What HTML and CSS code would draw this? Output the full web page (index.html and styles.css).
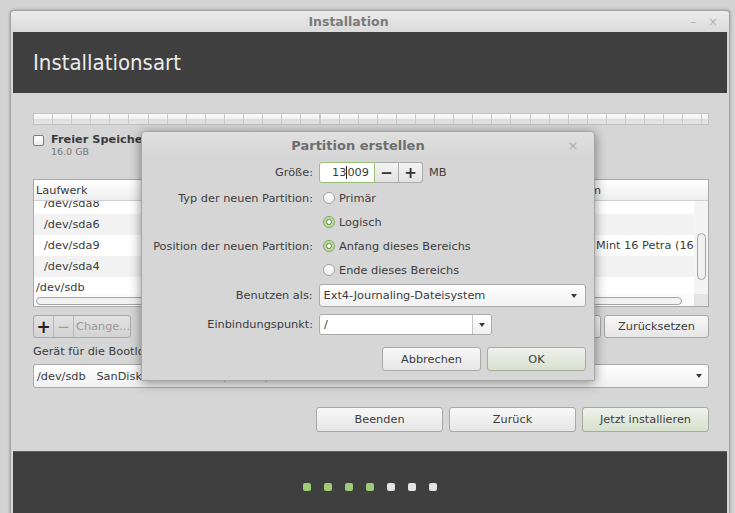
FILE: index.html
```html
<!DOCTYPE html>
<html lang="de">
<head>
<meta charset="utf-8">
<title>Installation</title>
<link rel="stylesheet" href="styles.css">
</head>
<body>
<div class="window">
  <div class="titlebar">
    <span class="win-title">Installation</span>
    <span class="wm-buttons"><span class="wm-min">–</span><span class="wm-close">×</span></span>
  </div>
  <div class="frame">
    <div class="header"><h1>Installationsart</h1></div>
    <div class="content">
      <div class="partbar"></div>
      <div class="legend">
        <span class="checkbox"></span>
        <div>
          <div class="legend-name">Freier Speicherplatz</div>
          <div class="legend-size">16.0 GB</div>
        </div>
      </div>

      <div class="table">
        <div class="thead"><span class="col-dev">Laufwerk</span><span class="col-sys">System</span></div>
        <div class="rows">
          <div class="rows-inner">
            <div class="row"><span class="col-dev sub">/dev/sda8</span><span class="col-sys"></span></div>
            <div class="row"><span class="col-dev sub">/dev/sda6</span><span class="col-sys"></span></div>
            <div class="row"><span class="col-dev sub">/dev/sda9</span><span class="col-sys">Linux Mint 16 Petra (16.04)</span></div>
            <div class="row"><span class="col-dev sub">/dev/sda4</span><span class="col-sys"></span></div>
            <div class="row"><span class="col-dev">/dev/sdb</span><span class="col-sys"></span></div>
          </div>
        </div>
        <div class="vscroll"><span class="vthumb"></span></div>
        <div class="hscroll"><span class="hthumb"></span></div>
        <div class="corner"></div>
      </div>

      <div class="tools">
        <div class="btn-group">
          <span class="tb tb-add">+</span>
          <span class="tb tb-del">−</span>
          <span class="tb tb-change">Change...</span>
        </div>
        <div class="tools-right">
          <span class="btn">Neue Partitionstabelle …</span>
          <span class="btn btn-revert">Zurücksetzen</span>
        </div>
      </div>

      <div class="boot-label">Gerät für die Bootloader-Installation:</div>
      <div class="combo boot-combo">
        <span class="combo-text">/dev/sdb &nbsp; SanDisk Cruzer Blade (8.0 GB)</span>
        <span class="arrow"></span>
      </div>

      <div class="actions">
        <span class="btn btn-wide">Beenden</span>
        <span class="btn btn-wide">Zurück</span>
        <span class="btn btn-wide btn-suggested">Jetzt installieren</span>
      </div>
    </div>
    <div class="footer">
      <span class="dot done"></span>
      <span class="dot done"></span>
      <span class="dot done"></span>
      <span class="dot done"></span>
      <span class="dot"></span>
      <span class="dot"></span>
      <span class="dot"></span>
    </div>
  </div>
</div>

<div class="dialog">
  <div class="dlg-titlebar">
    <span class="dlg-title">Partition erstellen</span>
    <span class="dlg-close">×</span>
  </div>
  <div class="dlg-body">
    <div class="field f-size">
      <span class="lbl">Größe:</span>
      <div class="spin">
        <span class="spin-entry">13<span class="caret"></span>009</span>
        <span class="spin-btn">−</span>
        <span class="spin-btn">+</span>
      </div>
      <span class="unit">MB</span>
    </div>
    <div class="field f-radio f-first">
      <span class="lbl">Typ der neuen Partition:</span>
      <span class="radio"></span><span class="radio-text">Primär</span>
    </div>
    <div class="field f-radio">
      <span class="lbl"></span>
      <span class="radio checked"></span><span class="radio-text">Logisch</span>
    </div>
    <div class="field f-radio">
      <span class="lbl">Position der neuen Partition:</span>
      <span class="radio checked"></span><span class="radio-text">Anfang dieses Bereichs</span>
    </div>
    <div class="field f-radio">
      <span class="lbl"></span>
      <span class="radio"></span><span class="radio-text">Ende dieses Bereichs</span>
    </div>
    <div class="field f-use">
      <span class="lbl">Benutzen als:</span>
      <div class="combo use-combo">
        <span class="combo-text">Ext4-Journaling-Dateisystem</span>
        <span class="arrow"></span>
      </div>
    </div>
    <div class="field f-mount">
      <span class="lbl">Einbindungspunkt:</span>
      <div class="entry-combo">
        <span class="entry-part">/</span>
        <span class="entry-btn"><span class="arrow"></span></span>
      </div>
    </div>
    <div class="dlg-actions">
      <span class="btn dlg-btn">Abbrechen</span>
      <span class="btn dlg-btn btn-suggested">OK</span>
    </div>
  </div>
</div>
</body>
</html>
```
FILE: styles.css
```css
* { box-sizing: border-box; }

html, body { margin: 0; }

body {
  width: 735px;
  height: 513px;
  overflow: hidden;
  position: relative;
  background: #d3d3d3;
  font-family: "DejaVu Sans", sans-serif;
  font-size: 11.3px;
  color: #3c3c3c;
}

/* main installer window */
.window {
  margin: 10px 0 0 10px;
  width: 720px;
  height: 520px;
  background: #d6d6d6;
  border: 1px solid #a4a4a4;
  border-bottom: none;
  border-radius: 4px 4px 0 0;
  box-shadow: 0 0 3px rgba(0, 0, 0, 0.35);
}

.titlebar {
  height: 21px;
  display: flex;
  align-items: center;
  background: linear-gradient(#ececec, #dadada);
  border-radius: 4px 4px 0 0;
}

.win-title {
  flex: 1;
  text-align: center;
  padding-left: 16px;
  font-weight: bold;
  font-size: 12.5px;
  color: #7a7a7a;
}

.wm-buttons {
  display: flex;
  gap: 12px;
  padding: 0 11px 0 20px;
  color: #b4b4b4;
  font-size: 12px;
}

.frame { padding: 0 2px; }

.header {
  height: 61px;
  background: #3f3f3f;
  padding-left: 20px;
  display: flex;
  align-items: center;
}

.header h1 {
  margin: 0;
  font-family: "DejaVu Sans Condensed", "DejaVu Sans", sans-serif;
  font-stretch: condensed;
  font-weight: normal;
  font-size: 22px;
  color: #ebebeb;
}

.content {
  height: 358px;
  padding: 20px 18px 0 20px;
}

/* partition overview bar */
.partbar {
  height: 12px;
  border: 1px solid #c2c2c2;
  background:
    repeating-linear-gradient(90deg, transparent 0 18px, #cbcbcb 18px 19.1px),
    linear-gradient(#fbfbfb, #f1f1f1 50%, #dedede 55%, #e6e6e6);
}

.legend {
  margin-top: 8px;
  display: flex;
  gap: 7px;
}

.checkbox {
  width: 11px;
  height: 11px;
  margin-top: 2px;
  border: 1px solid #7c7c7c;
  border-radius: 2px;
  background: linear-gradient(#ffffff, #ececec);
}

.legend-name {
  font-weight: bold;
  line-height: 13px;
  white-space: nowrap;
}

.legend-size {
  font-size: 9.5px;
  line-height: 12px;
  color: #767676;
}

/* partition table */
.table {
  margin-top: 21px;
  height: 128px;
  border: 1px solid #a9a9a9;
  background: #fff;
  display: grid;
  grid-template-columns: 1fr 14px;
  grid-template-rows: 21px 93px 1fr;
}

.thead {
  grid-column: 1 / 3;
  display: grid;
  grid-template-columns: 525px 1fr;
  align-items: center;
  background: linear-gradient(#ffffff, #eeeeee);
  border-bottom: 1px solid #d0d0d0;
  white-space: nowrap;
  overflow: hidden;
}

.thead .col-dev { padding-left: 2px; }

.rows {
  overflow: hidden;
}

.rows-inner { margin-top: -8px; }

.row {
  height: 21px;
  line-height: 21px;
  display: grid;
  grid-template-columns: 528px 1fr;
  white-space: nowrap;
  overflow: hidden;
}

.row:nth-child(even) { background: #f2f2f2; }

.row .col-dev { padding-left: 2px; }
.row .col-dev.sub { padding-left: 10px; }

.row span { overflow: hidden; }

.vscroll {
  position: relative;
  background: #f4f4f4;
}

.vthumb {
  position: absolute;
  left: 3px;
  top: 32px;
  width: 9px;
  height: 47px;
  border: 1px solid #a3a3a3;
  border-radius: 5px;
  background: #f0f0f0;
}

.hscroll {
  position: relative;
  background: #fbfbfb;
}

.hthumb {
  position: absolute;
  left: 2px;
  top: 3px;
  width: 646px;
  height: 8px;
  border: 1px solid #a6a6a6;
  border-radius: 4px;
  background: #f2f2f2;
}

.corner { background: #e4e4e4; }

/* buttons under the table */
.tools {
  margin-top: 8px;
  height: 23px;
  display: flex;
  justify-content: space-between;
}

.btn-group {
  display: flex;
  border: 1px solid #a9a9a9;
  border-radius: 3px;
  background: linear-gradient(#e2e2e2, #d3d3d3);
}

.tb {
  display: flex;
  align-items: center;
  justify-content: center;
}

.tb + .tb { border-left: 1px solid #b9b9b9; }

.tb-add { width: 19px; font-size: 17px; font-weight: bold; color: #222; }
.tb-del { width: 20px; font-size: 15px; color: #9b9b9b; }
.tb-change { width: 57px; color: #9a9a9a; padding-left: 2px; justify-content: flex-start; }

.tools-right {
  display: flex;
  gap: 3px;
}

.btn {
  display: flex;
  align-items: center;
  justify-content: center;
  padding: 0 10px;
  border: 1px solid #a8a8a8;
  border-radius: 3px;
  background: linear-gradient(#f8f8f8, #e6e6e6);
  color: #3c3c3c;
  white-space: nowrap;
}

.btn-revert { width: 105px; }

.btn-suggested {
  background: linear-gradient(#eff1ec, #d7e1cd);
  border-color: #a4ab9d;
}

.boot-label {
  margin-top: 7px;
  line-height: 14px;
}

.combo {
  display: flex;
  align-items: center;
  justify-content: space-between;
  border: 1px solid #aaaaaa;
  border-radius: 3px;
  background: linear-gradient(#ffffff, #f1f1f1);
}

.boot-combo {
  margin-top: 5px;
  height: 24px;
  padding: 0 6px 0 3px;
}

.arrow {
  width: 0;
  height: 0;
  border-left: 3.5px solid transparent;
  border-right: 3.5px solid transparent;
  border-top: 4px solid #3a3a3a;
}

.actions {
  margin-top: 19px;
  height: 25px;
  display: flex;
  justify-content: flex-end;
  gap: 6px;
}

.btn-wide { width: 127px; }

/* progress footer */
.footer {
  height: 70px;
  background: #3f3f3f;
  border-top: 1px solid #5c5c5c;
  display: flex;
  justify-content: center;
  gap: 13px;
  padding-top: 31px;
}

.dot {
  width: 8px;
  height: 8px;
  border-radius: 2px;
  background: #e4e4e4;
}

.dot.done { background: #9fca76; }

/* modal dialog */
.dialog {
  position: absolute;
  left: 141px;
  top: 131px;
  width: 454px;
  height: 250px;
  background: #d6d6d6;
  border: 1px solid #a7a7a7;
  border-radius: 4px 4px 0 0;
  box-shadow: 0 2px 12px rgba(0, 0, 0, 0.45);
}

.dlg-titlebar {
  height: 26px;
  display: flex;
  align-items: center;
  background: linear-gradient(#e0e0e0, #d6d6d6);
  border-radius: 4px 4px 0 0;
}

.dlg-title {
  flex: 1;
  text-align: center;
  padding-left: 14px;
  font-weight: bold;
  font-size: 13px;
  color: #6e6e6e;
}

.dlg-close {
  width: 34px;
  padding-right: 8px;
  text-align: center;
  color: #adadad;
  font-size: 13px;
}

.dlg-body {
  padding: 4px 8px 0 10px;
}

.field {
  display: flex;
  align-items: center;
}

.lbl {
  width: 161px;
  margin-right: 6px;
  text-align: right;
  white-space: nowrap;
}

.f-size { height: 21px; }

.spin {
  display: flex;
  height: 21px;
}

.spin-entry {
  width: 56px;
  display: flex;
  align-items: center;
  justify-content: flex-end;
  padding-right: 5px;
  background: #fff;
  border: 1px solid #98c078;
  border-radius: 3px 0 0 3px;
}

.caret {
  display: inline-block;
  width: 1px;
  height: 13px;
  background: #222;
}

.spin-btn {
  width: 24px;
  display: flex;
  align-items: center;
  justify-content: center;
  border: 1px solid #ababab;
  border-left: none;
  background: linear-gradient(#f4f4f4, #e2e2e2);
  font-size: 15px;
  font-weight: bold;
  color: #333;
}

.spin-btn:last-child { border-radius: 0 3px 3px 0; }

.unit { margin-left: 6px; }

.f-radio { height: 24px; }
.f-first { margin-top: 3px; }

.radio {
  width: 12px;
  height: 12px;
  margin-left: 4px;
  margin-right: 4px;
  border: 1px solid #a3a3a3;
  border-radius: 50%;
  background: linear-gradient(#ffffff, #ededed);
}

.radio.checked {
  border-color: #7da75a;
  background: radial-gradient(circle, #ffffff 0 1.6px, #6f9d4b 2.2px 2.8px, #c3dca7 3.3px);
}

.f-use { margin-top: 2px; height: 23px; }

.use-combo {
  width: 268px;
  height: 23px;
  padding: 0 8px 0 4px;
}

.f-mount { margin-top: 7px; height: 21px; }

.entry-combo {
  width: 173px;
  height: 21px;
  display: flex;
  border: 1px solid #aaaaaa;
  border-radius: 3px;
  background: #fff;
}

.entry-part {
  flex: 1;
  display: flex;
  align-items: center;
  padding-left: 4px;
  border-right: 1px solid #c4c4c4;
}

.entry-btn {
  width: 18px;
  display: flex;
  align-items: center;
  justify-content: center;
  background: linear-gradient(#ffffff, #f1f1f1);
  border-radius: 0 3px 3px 0;
}

.dlg-actions {
  margin-top: 12px;
  height: 24px;
  display: flex;
  justify-content: flex-end;
  gap: 6px;
}

.dlg-btn { width: 99px; }
```
